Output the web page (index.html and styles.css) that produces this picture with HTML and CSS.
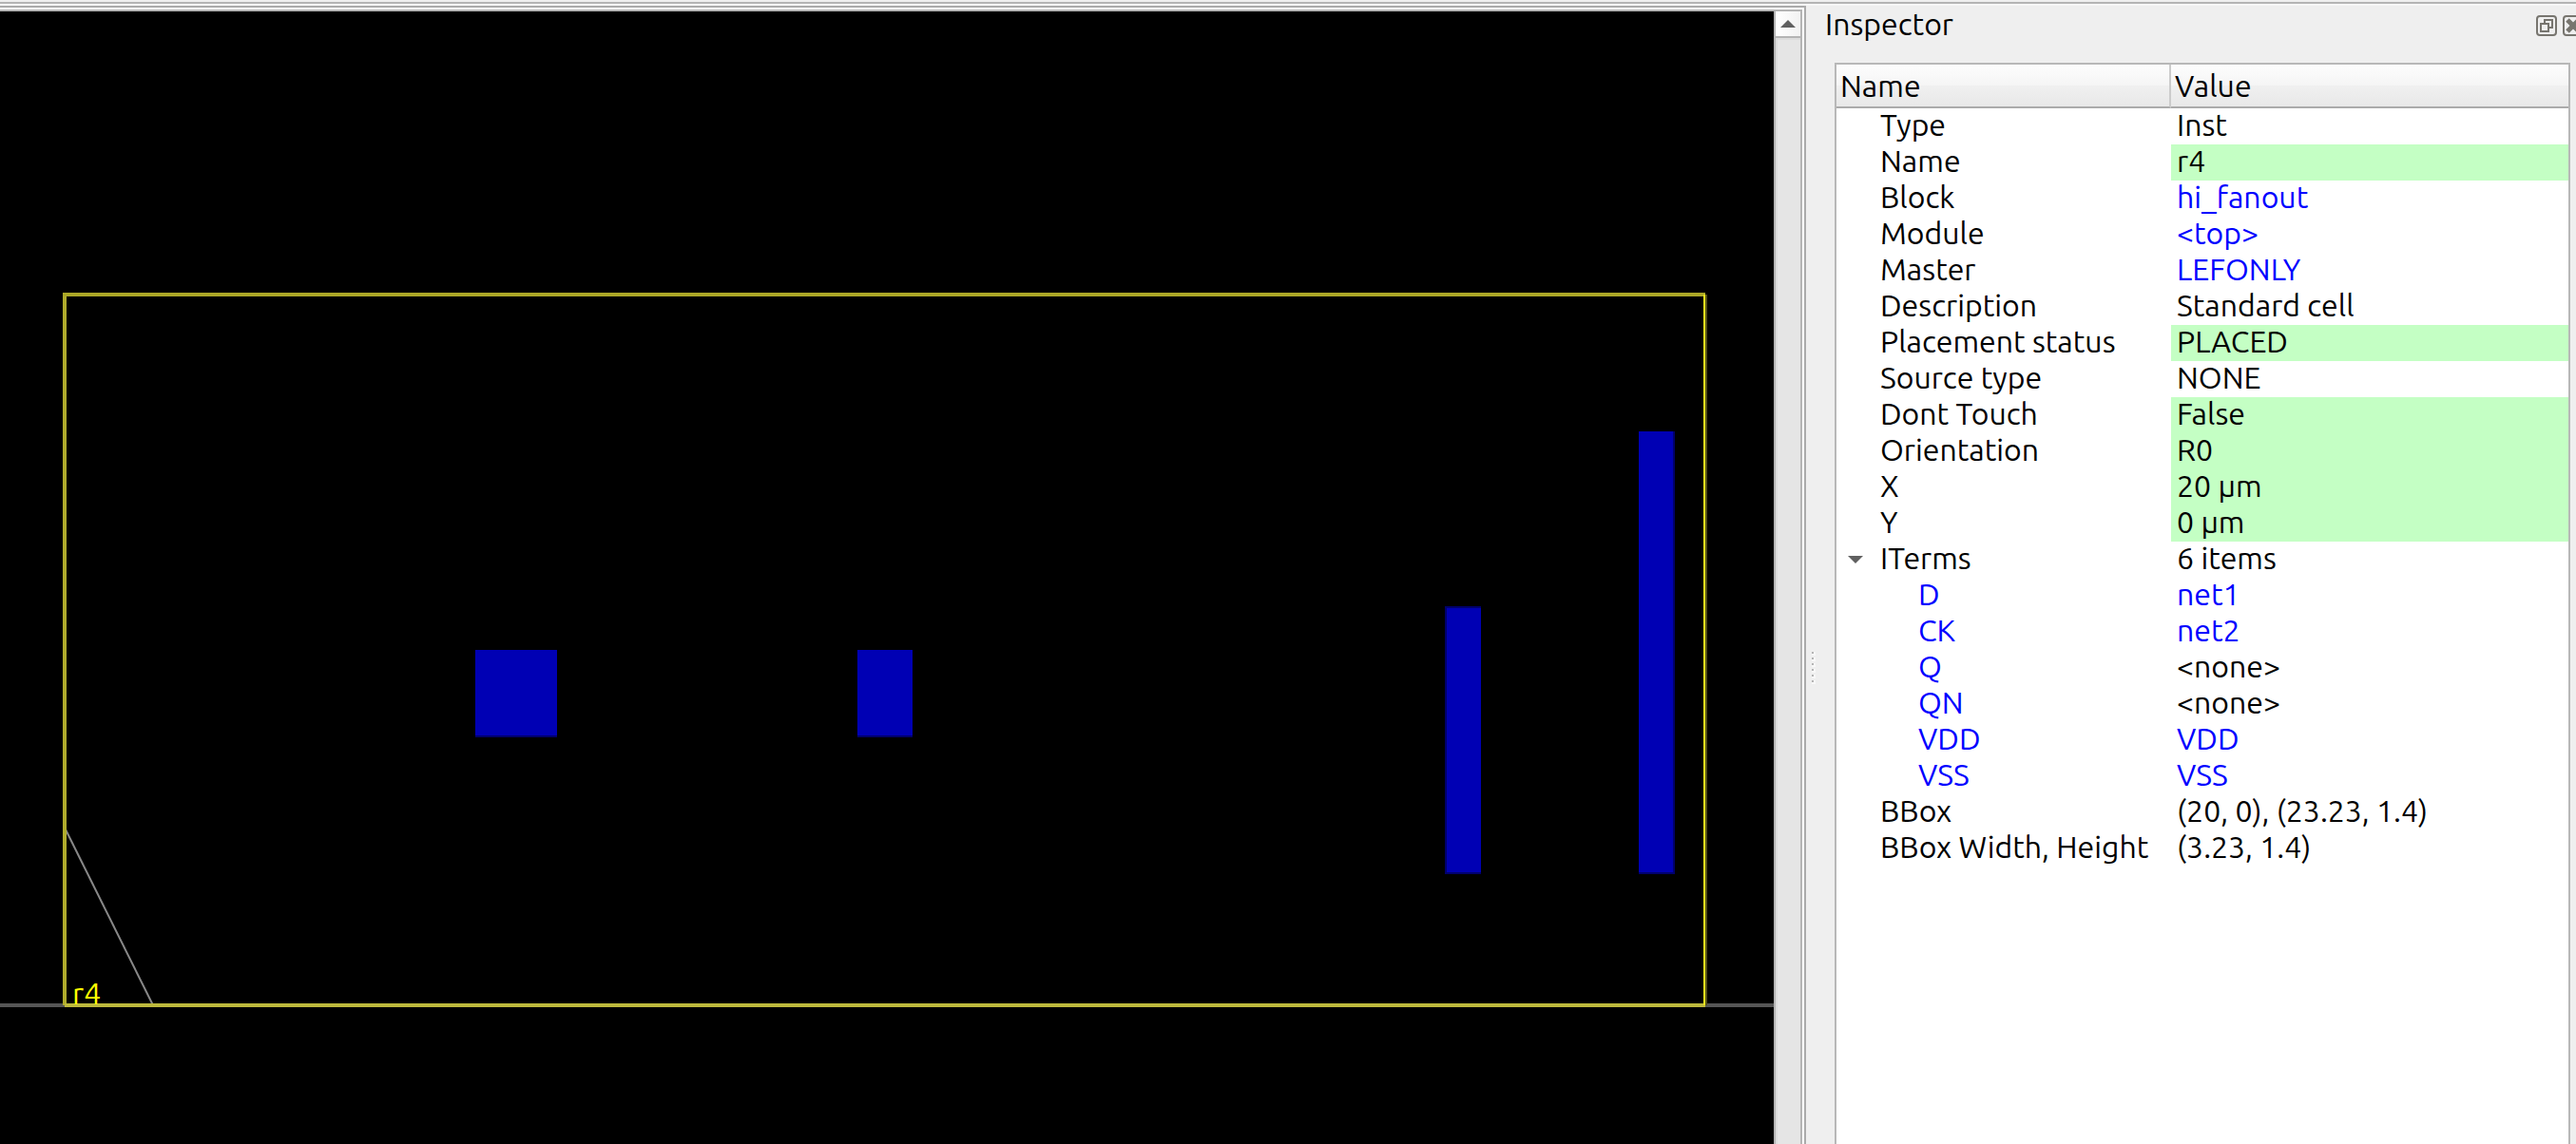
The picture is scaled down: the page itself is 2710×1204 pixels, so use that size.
FILE: index.html
```html
<!DOCTYPE html>
<html lang="en">
<head>
<meta charset="utf-8">
<title>Inspector</title>
<link rel="stylesheet" href="styles.css">
</head>
<body>
<div class="window">
  <main class="viewer">
    <svg class="layout" viewBox="0 12 1866 1192" preserveAspectRatio="xMinYMin slice" role="img" aria-label="Layout of instance r4" shape-rendering="crispEdges">
      <path class="row-line" d="M0 1058H1866"/>
      <path class="orientation" d="M68 871L161 1058" shape-rendering="auto"/>
      <g class="pin">
        <rect x="500" y="684" width="86" height="90"/>
        <rect x="902" y="684" width="58" height="90"/>
        <rect x="1522" y="640" width="36" height="278"/>
        <rect x="1724" y="454" width="36" height="464"/>
      </g>
      <g class="pin-edge">
        <path d="M500 775H586M902 775H960M1520 639H1558M1520 919H1558M1724 919H1762M1521 640V918M1761 454V918"/>
      </g>
      <path class="outline-v" d="M68 310V1058"/>
      <path class="outline-t" d="M66 310H1794"/>
      <path class="outline-b" d="M68 1058H1794"/>
      <path class="outline-r" d="M1793 310V1058"/>
      <path class="outline-shade" d="M1795 310V1058"/>
      <text class="inst-name" x="76" y="1057">r4</text>
    </svg>
    <div class="scrollbar">
      <button class="scroll-up" type="button" aria-label="Scroll up">
        <svg viewBox="0 0 16 8" width="16" height="8"><path d="M8 0L16 8H0Z"/></svg>
      </button>
      <div class="track"></div>
    </div>
  </main>
  <div class="splitter">
    <svg width="4" height="34" viewBox="0 0 4 34" shape-rendering="crispEdges"><path class="dot-light" d="M2 0V34" stroke-dasharray="4 2"/><path class="dot-dark" d="M1 0V34" stroke-dasharray="2 4"/></svg>
  </div>
  <aside class="inspector">
    <header class="titlebar">
      <h1>Inspector</h1>
      <div class="dock-buttons">
        <button type="button" aria-label="Float">
          <svg viewBox="0 0 22 22" width="22" height="22"><rect x="1" y="1" width="20" height="20" rx="3"/><path d="M5 9H13V17H5ZM9 9V5H17V13H13"/></svg>
        </button>
        <button type="button" aria-label="Close">
          <svg viewBox="0 0 22 22" width="22" height="22"><rect x="1" y="1" width="20" height="20" rx="3"/><path class="cross" d="M5 5L17 17M17 5L5 17"/></svg>
        </button>
      </div>
    </header>
    <div class="tree">
      <table>
        <thead><tr><th scope="col" class="name-col">Name</th><th scope="col">Value</th></tr></thead>
        <tbody>
          <tr><td>Type</td><td>Inst</td></tr>
          <tr><td>Name</td><td class="editable">r4</td></tr>
          <tr><td>Block</td><td><a href="#block">hi_fanout</a></td></tr>
          <tr><td>Module</td><td><a href="#module">&lt;top&gt;</a></td></tr>
          <tr><td>Master</td><td><a href="#master">LEFONLY</a></td></tr>
          <tr><td>Description</td><td>Standard cell</td></tr>
          <tr><td>Placement status</td><td class="editable">PLACED</td></tr>
          <tr><td>Source type</td><td>NONE</td></tr>
          <tr><td>Dont Touch</td><td class="editable">False</td></tr>
          <tr><td>Orientation</td><td class="editable">R0</td></tr>
          <tr><td>X</td><td class="editable">20 µm</td></tr>
          <tr><td>Y</td><td class="editable">0 µm</td></tr>
          <tr class="group"><td><button class="expander" type="button" aria-label="Collapse ITerms" aria-expanded="true"><svg viewBox="0 0 16 8" width="16" height="8"><path d="M0 0H16L8 8Z"/></svg></button>ITerms</td><td>6 items</td></tr>
          <tr class="child"><td><a href="#D">D</a></td><td><a href="#net1">net1</a></td></tr>
          <tr class="child"><td><a href="#CK">CK</a></td><td><a href="#net2">net2</a></td></tr>
          <tr class="child"><td><a href="#Q">Q</a></td><td>&lt;none&gt;</td></tr>
          <tr class="child"><td><a href="#QN">QN</a></td><td>&lt;none&gt;</td></tr>
          <tr class="child"><td><a href="#VDD">VDD</a></td><td><a href="#netVDD">VDD</a></td></tr>
          <tr class="child"><td><a href="#VSS">VSS</a></td><td><a href="#netVSS">VSS</a></td></tr>
          <tr><td>BBox</td><td>(20, 0), (23.23, 1.4)</td></tr>
          <tr><td>BBox Width, Height</td><td>(3.23, 1.4)</td></tr>
        </tbody>
      </table>
    </div>
  </aside>
</div>
</body>
</html>
```
FILE: styles.css
```css
* {
  box-sizing: border-box;
}

body {
  margin: 0;
  background: #efefef;
  color: #000;
  font: 32px/34px Ubuntu, "Noto Sans", sans-serif;
}

.window {
  display: flex;
  height: 100vh;
  padding-top: 2px;
  overflow: hidden;
  background: linear-gradient(#efefef 2px, #b4b4b4 2px, #b4b4b4 4px, #f7f7f7 4px, #f7f7f7 6px, #efefef 6px);
}

/* Layout canvas with its scroll bar */
.viewer {
  display: flex;
  flex: 1;
  min-width: 0;
  margin-top: 4px;
  border: solid #ababab;
  border-width: 2px 2px 0 0;
  padding: 2px 2px 0 0;
  background: #fff;
}

.layout {
  flex: 1;
  min-width: 0;
  width: 100%;
  height: 100%;
  border-top: 2px solid #b4b4b4;
  background: #000;
}

.layout path {
  fill: none;
  stroke-width: 4;
}

.layout .row-line {
  stroke: #555;
}

.layout .orientation {
  stroke: #888;
  stroke-width: 2;
}

.pin {
  fill: #0000b4;
}

.layout .pin-edge path {
  stroke: #00006c;
  stroke-width: 2;
}

.layout .outline-v {
  stroke: #b0ac2c;
}

.layout .outline-t {
  stroke: #aca827;
}

.layout .outline-b {
  stroke: #bdb93c;
}

.layout .outline-r {
  stroke: #ebe41c;
  stroke-width: 2;
}

.layout .outline-shade {
  stroke: #56531a;
  stroke-width: 2;
}

.inst-name {
  fill: #ff0;
  font-size: 32px;
}

.scrollbar {
  display: flex;
  flex-direction: column;
  width: 30px;
  border: solid #b4b4b4;
  border-width: 2px 2px 0;
}

.scroll-up {
  display: flex;
  align-items: center;
  justify-content: center;
  height: 28px;
  padding: 0;
  border: 0;
  border-bottom: 2px solid #b4b4b4;
  background: linear-gradient(90deg, #fff, #f2f2f2);
}

.scroll-up path,
.expander path {
  fill: #606060;
}

.track {
  flex: 1;
  border: solid #dcdcdc;
  border-width: 2px 0 0 2px;
  background: #e5e5e5;
}

.splitter {
  display: flex;
  align-items: center;
  width: 10px;
  padding: 200px 0 0 6px;
}

.splitter path {
  stroke-width: 4;
}

.dot-light {
  stroke: #f8f8f8;
}

.splitter .dot-dark {
  stroke: #b4b4b4;
  stroke-width: 2;
}

/* Inspector dock */
.inspector {
  display: flex;
  flex-direction: column;
  width: 800px;
  padding: 4px 6px 0 10px;
}

.titlebar {
  display: flex;
  align-items: center;
  justify-content: space-between;
  height: 42px;
}

h1 {
  margin: 0;
  padding-bottom: 4px;
  font: inherit;
}

.dock-buttons {
  display: flex;
  gap: 6px;
  margin-right: -14px;
}

.dock-buttons button {
  width: 22px;
  height: 22px;
  padding: 0;
  border: 0;
  background: none;
}

.dock-buttons svg {
  display: block;
  fill: none;
  stroke: #77756f;
  stroke-width: 2;
}

.dock-buttons .cross {
  stroke-width: 5;
}

.tree {
  flex: 1;
  margin: 18px 0 0 10px;
  border: 2px solid #b8b8b8;
  border-bottom: 0;
  background: #fff;
}

table {
  width: 100%;
  table-layout: fixed;
  border-collapse: separate;
  border-spacing: 0;
}

th {
  height: 46px;
  padding: 0 4px;
  border-bottom: 2px solid #ababab;
  background: linear-gradient(#fdfdfd, #f5f5f5 50%, #f0f0f0 50%, #e8e8e8);
  font-weight: normal;
  text-align: left;
}

.name-col {
  width: 352px;
  border-right: 2px solid #cbcbcb;
}

td {
  height: 38px;
  padding: 0 0 0 6px;
  vertical-align: top;
  white-space: nowrap;
}

td:first-child {
  padding-left: 46px;
}

.child td:first-child {
  padding-left: 86px;
}

.group td:first-child {
  padding-left: 12px;
}

.expander {
  width: 34px;
  padding: 0;
  border: 0;
  background: none;
  text-align: left;
}

.expander svg {
  display: block;
  margin-bottom: 6px;
}

.editable {
  background: #c4ffc4;
}

a {
  color: #00f;
  text-decoration: none;
}
```
